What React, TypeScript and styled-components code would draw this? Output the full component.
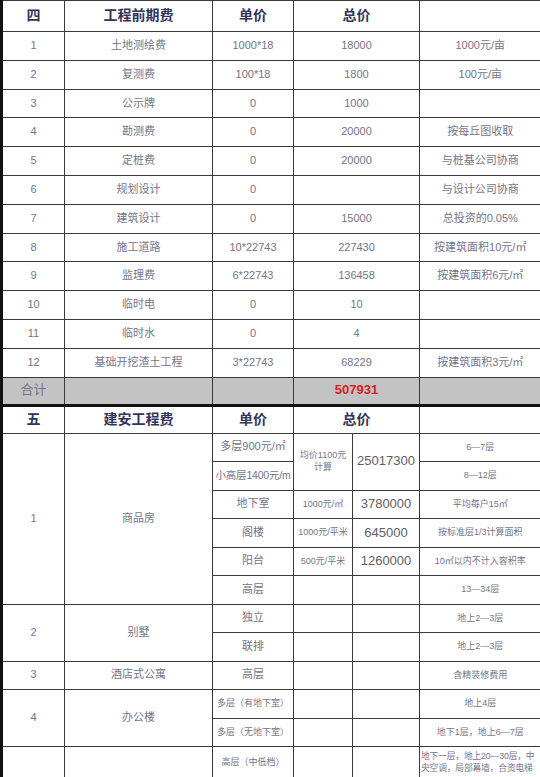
import styled, { createGlobalStyle } from 'styled-components'

const GlobalStyle = createGlobalStyle`
  html, body {
    margin: 0;
    padding: 0;
    background: #fff;
  }
  body {
    height: 777px;
    overflow: hidden;
    font-family: "Liberation Sans", "Noto Sans CJK SC", sans-serif;
  }
`

const Sheet = styled.table`
  width: 540px;
  table-layout: fixed;
  border-collapse: collapse;
  border-left: 3px solid #111;
  border-right: 2px solid #222;
`

const Row = styled.tr<{ $h: number; $thickTop?: boolean }>`
  height: ${({ $h }) => $h}px;
  & > td {
    border-top: ${({ $thickTop }) => ($thickTop ? '3px solid #111' : '1px solid #3a3a3a')};
  }
`

type Tone = 'head' | 'body' | 'num' | 'small' | 'note' | 'total' | 'red'

const Cell = styled.td<{ $tone?: Tone; $left?: boolean }>`
  border: 1px solid #3a3a3a;
  padding: 0 2px;
  text-align: ${({ $left }) => ($left ? 'left' : 'center')};
  vertical-align: middle;
  overflow: hidden;
  white-space: ${({ $tone }) => ($tone === 'note' || $tone === 'small' ? 'normal' : 'nowrap')};
  line-height: 1.25;
  background: ${({ $tone }) => ($tone === 'total' || $tone === 'red' ? '#c3c3c3' : '#fff')};
  color: ${({ $tone }) =>
    $tone === 'head' ? '#34345a' : $tone === 'red' ? '#d4202a' : $tone === 'num' ? '#5e5e66' : '#74748a'};
  font-weight: ${({ $tone }) => ($tone === 'head' || $tone === 'red' ? 700 : 400)};
  font-size: ${({ $tone }) =>
    $tone === 'head'
      ? '14px'
      : $tone === 'num' || $tone === 'red' || $tone === 'total'
        ? '13px'
        : $tone === 'small' || $tone === 'note'
          ? '9px'
          : '11px'};
`

const TightNote = styled(Cell)`
  padding: 0 1px;
  font-size: 8.7px;
  line-height: 1.35;
  letter-spacing: -0.1px;
`

const Squeezed = styled(Cell)`
  padding: 0;
  font-size: 10.5px;
  letter-spacing: -0.2px;
`

type Item = [string, string, string, string, string]

const phaseOne: Item[] = [
  ['1', '土地测绘费', '1000*18', '18000', '1000元/亩'],
  ['2', '复测费', '100*18', '1800', '100元/亩'],
  ['3', '公示牌', '0', '1000', ''],
  ['4', '勘测费', '0', '20000', '按每丘图收取'],
  ['5', '定桩费', '0', '20000', '与桩基公司协商'],
  ['6', '规划设计', '0', '', '与设计公司协商'],
  ['7', '建筑设计', '0', '15000', '总投资的0.05%'],
  ['8', '施工道路', '10*22743', '227430', '按建筑面积10元/㎡'],
  ['9', '监理费', '6*22743', '136458', '按建筑面积6元/㎡'],
  ['10', '临时电', '0', '10', ''],
  ['11', '临时水', '0', '4', ''],
  ['12', '基础开挖渣土工程', '3*22743', '68229', '按建筑面积3元/㎡'],
]

const rowH = 28.8
const subH = 28.5

export default function App() {
  return (
    <>
      <GlobalStyle />
      <Sheet>
        <colgroup>
          <col style={{ width: 63 }} />
          <col style={{ width: 148 }} />
          <col style={{ width: 81 }} />
          <col style={{ width: 59 }} />
          <col style={{ width: 67 }} />
          <col style={{ width: 122 }} />
        </colgroup>
        <tbody>
          <Row $h={31}>
            <Cell $tone="head">四</Cell>
            <Cell $tone="head">工程前期费</Cell>
            <Cell $tone="head">单价</Cell>
            <Cell $tone="head" colSpan={2}>总价</Cell>
            <Cell />
          </Row>
          {phaseOne.map(([no, name, unit, total, note]) => (
            <Row key={no} $h={rowH}>
              <Cell>{no}</Cell>
              <Cell>{name}</Cell>
              <Cell>{unit}</Cell>
              <Cell colSpan={2}>{total}</Cell>
              <Cell>{note}</Cell>
            </Row>
          ))}
          <Row $h={28}>
            <Cell $tone="total">合计</Cell>
            <Cell $tone="total" />
            <Cell $tone="total" />
            <Cell $tone="red" colSpan={2}>507931</Cell>
            <Cell $tone="total" />
          </Row>

          <Row $h={28} $thickTop>
            <Cell $tone="head">五</Cell>
            <Cell $tone="head">建安工程费</Cell>
            <Cell $tone="head">单价</Cell>
            <Cell $tone="head" colSpan={2}>总价</Cell>
            <Cell />
          </Row>

          <Row $h={subH}>
            <Cell rowSpan={6}>1</Cell>
            <Cell rowSpan={6}>商品房</Cell>
            <Cell>多层900元/㎡</Cell>
            <Cell $tone="small" rowSpan={2}>均价1100元计算</Cell>
            <Cell $tone="num" rowSpan={2}>25017300</Cell>
            <Cell $tone="note">6—7层</Cell>
          </Row>
          <Row $h={subH}>
            <Squeezed>小高层1400元/m</Squeezed>
            <Cell $tone="note">8—12层</Cell>
          </Row>
          <Row $h={subH}>
            <Cell>地下室</Cell>
            <Cell $tone="small">1000元/㎡</Cell>
            <Cell $tone="num">3780000</Cell>
            <Cell $tone="note">平均每户15㎡</Cell>
          </Row>
          <Row $h={subH}>
            <Cell>阁楼</Cell>
            <Cell $tone="small">1000元/平米</Cell>
            <Cell $tone="num">645000</Cell>
            <Cell $tone="note">按标准层1/3计算面积</Cell>
          </Row>
          <Row $h={subH}>
            <Cell>阳台</Cell>
            <Cell $tone="small">500元/平米</Cell>
            <Cell $tone="num">1260000</Cell>
            <Cell $tone="note">10㎡以内不计入容积率</Cell>
          </Row>
          <Row $h={subH}>
            <Cell>高层</Cell>
            <Cell />
            <Cell />
            <Cell $tone="note">13—34层</Cell>
          </Row>

          <Row $h={subH}>
            <Cell rowSpan={2}>2</Cell>
            <Cell rowSpan={2}>别墅</Cell>
            <Cell>独立</Cell>
            <Cell />
            <Cell />
            <Cell $tone="note">地上2—3层</Cell>
          </Row>
          <Row $h={subH}>
            <Cell>联排</Cell>
            <Cell />
            <Cell />
            <Cell $tone="note">地上2—3层</Cell>
          </Row>

          <Row $h={subH}>
            <Cell>3</Cell>
            <Cell>酒店式公寓</Cell>
            <Cell>高层</Cell>
            <Cell />
            <Cell />
            <Cell $tone="note">含精装修费用</Cell>
          </Row>

          <Row $h={subH}>
            <Cell rowSpan={2}>4</Cell>
            <Cell rowSpan={2}>办公楼</Cell>
            <Cell $tone="small">多层（有地下室）</Cell>
            <Cell />
            <Cell />
            <Cell $tone="note">地上4层</Cell>
          </Row>
          <Row $h={subH}>
            <Cell $tone="small">多层（无地下室）</Cell>
            <Cell />
            <Cell />
            <Cell $tone="note">地下1层，地上6—7层</Cell>
          </Row>

          <Row $h={32}>
            <Cell />
            <Cell />
            <Cell $tone="small">高层（中低档）</Cell>
            <Cell />
            <Cell />
            <TightNote $tone="note" $left>地下一层，地上20—30层，中央空调，局部幕墙，合资电梯</TightNote>
          </Row>
        </tbody>
      </Sheet>
    </>
  )
}
